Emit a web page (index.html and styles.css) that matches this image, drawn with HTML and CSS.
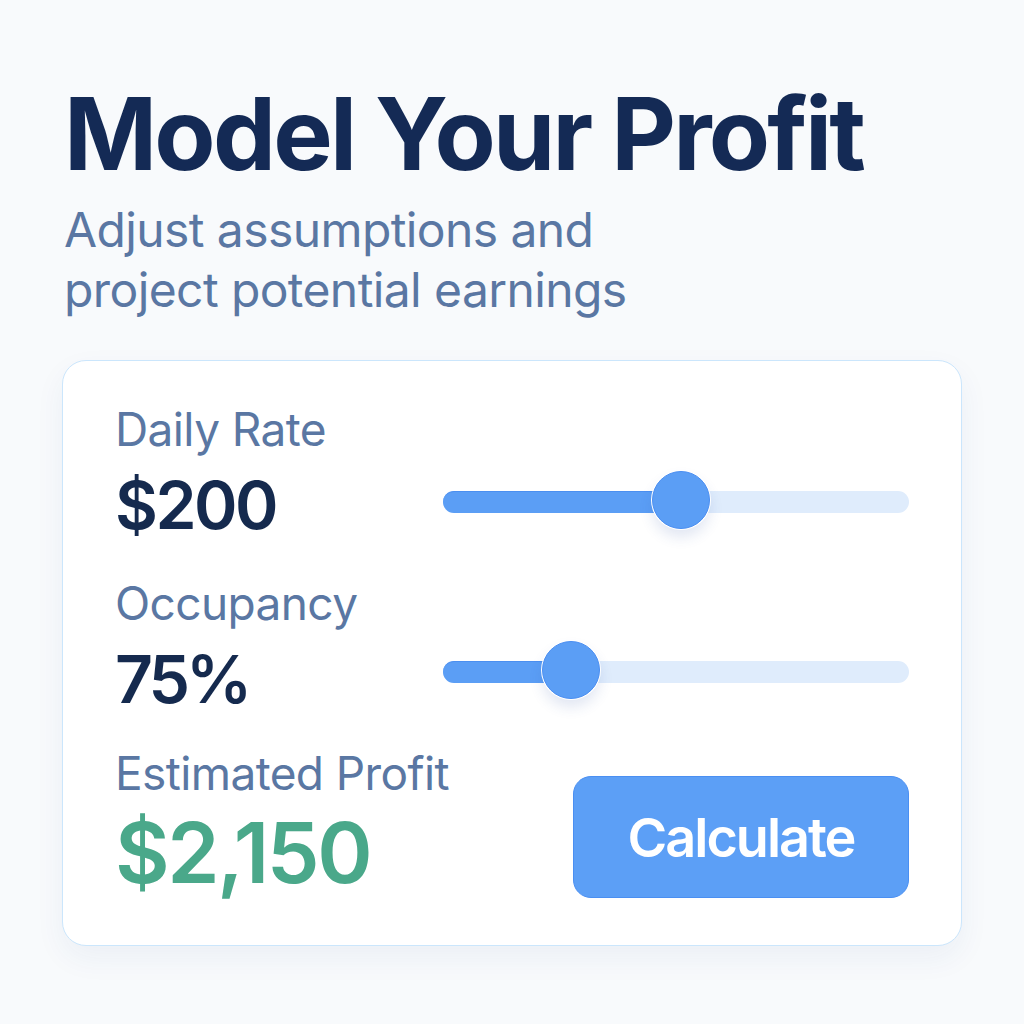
FILE: index.html
```html
<!DOCTYPE html>
<html lang="en">
<head>
<meta charset="utf-8">
<title>Model Your Profit</title>
<link rel="stylesheet" href="styles.css">
</head>
<body>
<main class="page">
  <header class="intro">
    <h1 class="title">Model Your Profit</h1>
    <p class="subtitle">Adjust assumptions and<br>project potential earnings</p>
  </header>
  <section class="card">
    <div class="row row-rate">
      <div class="label">Daily Rate</div>
      <div class="value">$200</div>
      <div class="slider">
        <div class="track"></div>
        <div class="fill" style="width: 51%"></div>
        <div class="thumb" style="left: 51%"></div>
      </div>
    </div>
    <div class="row row-occ">
      <div class="label">Occupancy</div>
      <div class="value">75%</div>
      <div class="slider">
        <div class="track"></div>
        <div class="fill" style="width: 27.4%"></div>
        <div class="thumb" style="left: 27.4%"></div>
      </div>
    </div>
    <div class="row row-profit">
      <div class="label">Estimated Profit</div>
      <div class="value profit">$2,150</div>
      <button class="calc" type="button">Calculate</button>
    </div>
  </section>
</main>
</body>
</html>
```

FILE: styles.css
```css
* { box-sizing: border-box; }
html, body { margin: 0; padding: 0; }
body {
  background: #f8fafc;
  font-family: Inter, "Noto Sans", sans-serif;
  width: 1024px;
  height: 1024px;
  overflow: hidden;
}
.page {
  padding: 84px 62px 0 62px;
  display: flex;
  flex-direction: column;
}
.intro { padding-left: 2px; }
.title {
  margin: 0;
  font-size: 100px;
  line-height: 100px;
  font-weight: 700;
  color: #142a55;
  letter-spacing: -2.8px;
}
.subtitle {
  margin: 16px 0 0 0;
  font-size: 48px;
  line-height: 60px;
  font-weight: 400;
  color: #5a77a3;
  letter-spacing: -0.6px;
}
.card {
  margin-top: 40px;
  width: 900px;
  height: 586px;
  background: #ffffff;
  border: 1px solid #cbe6fc;
  border-radius: 24px;
  box-shadow: 0 12px 30px rgba(40, 70, 130, 0.06);
  padding: 40px 52px 0 52px;
  display: flex;
  flex-direction: column;
}
.row {
  display: grid;
  grid-template-columns: 328px 1fr;
  grid-template-rows: auto auto;
}
.row-occ { margin-top: 32px; }
.row-profit { margin-top: 28px; }
.label {
  grid-column: 1 / 3;
  grid-row: 1;
  font-size: 46px;
  line-height: 56px;
  color: #5a77a3;
  font-weight: 400;
  letter-spacing: -0.6px;
  white-space: nowrap;
}
.row-profit .label { grid-column: 1; }
.value {
  grid-column: 1;
  grid-row: 2;
  margin-top: 10px;
  font-size: 66px;
  line-height: 76px;
  font-weight: 600;
  color: #152a4e;
  letter-spacing: -2.5px;
}
.row-occ .value { letter-spacing: -4px; }
.value.profit {
  font-size: 84px;
  line-height: 90px;
  color: #4aa88a;
  letter-spacing: -2.5px;
  margin-top: 6px;
}
.slider {
  grid-column: 2;
  grid-row: 2;
  position: relative;
  height: 22px;
  align-self: center;
}
.row-rate .slider { margin-top: 4px; }
.row-occ .slider { margin-bottom: 4px; }
.track {
  position: absolute;
  inset: 0;
  background: #dfecfc;
  border-radius: 11px;
}
.fill {
  position: absolute;
  left: 0;
  top: 0;
  bottom: 0;
  background: #5b9ef5;
  border-top: 1px solid #4b8ff0;
  border-radius: 11px 0 0 11px;
}
.thumb {
  position: absolute;
  top: 50%;
  width: 58px;
  height: 58px;
  margin-left: -29px;
  margin-top: -31px;
  border-radius: 50%;
  background: #5b9ef5;
  border: 1px solid #4a8ef2;
  box-shadow: 0 0 0 1px #ffffff, 0 8px 14px rgba(40, 80, 160, 0.14);
}
.calc {
  grid-column: 2;
  grid-row: 1 / 3;
  justify-self: end;
  align-self: start;
  margin-top: 31px;
  width: 336px;
  height: 122px;
  background: #5c9ff6;
  border: 1.5px solid #4a8ff2;
  border-radius: 18px;
  color: #ffffff;
  font-family: Inter, "Noto Sans", sans-serif;
  font-size: 54px;
  font-weight: 600;
  letter-spacing: -2px;
  padding: 0;
  cursor: pointer;
}
```
